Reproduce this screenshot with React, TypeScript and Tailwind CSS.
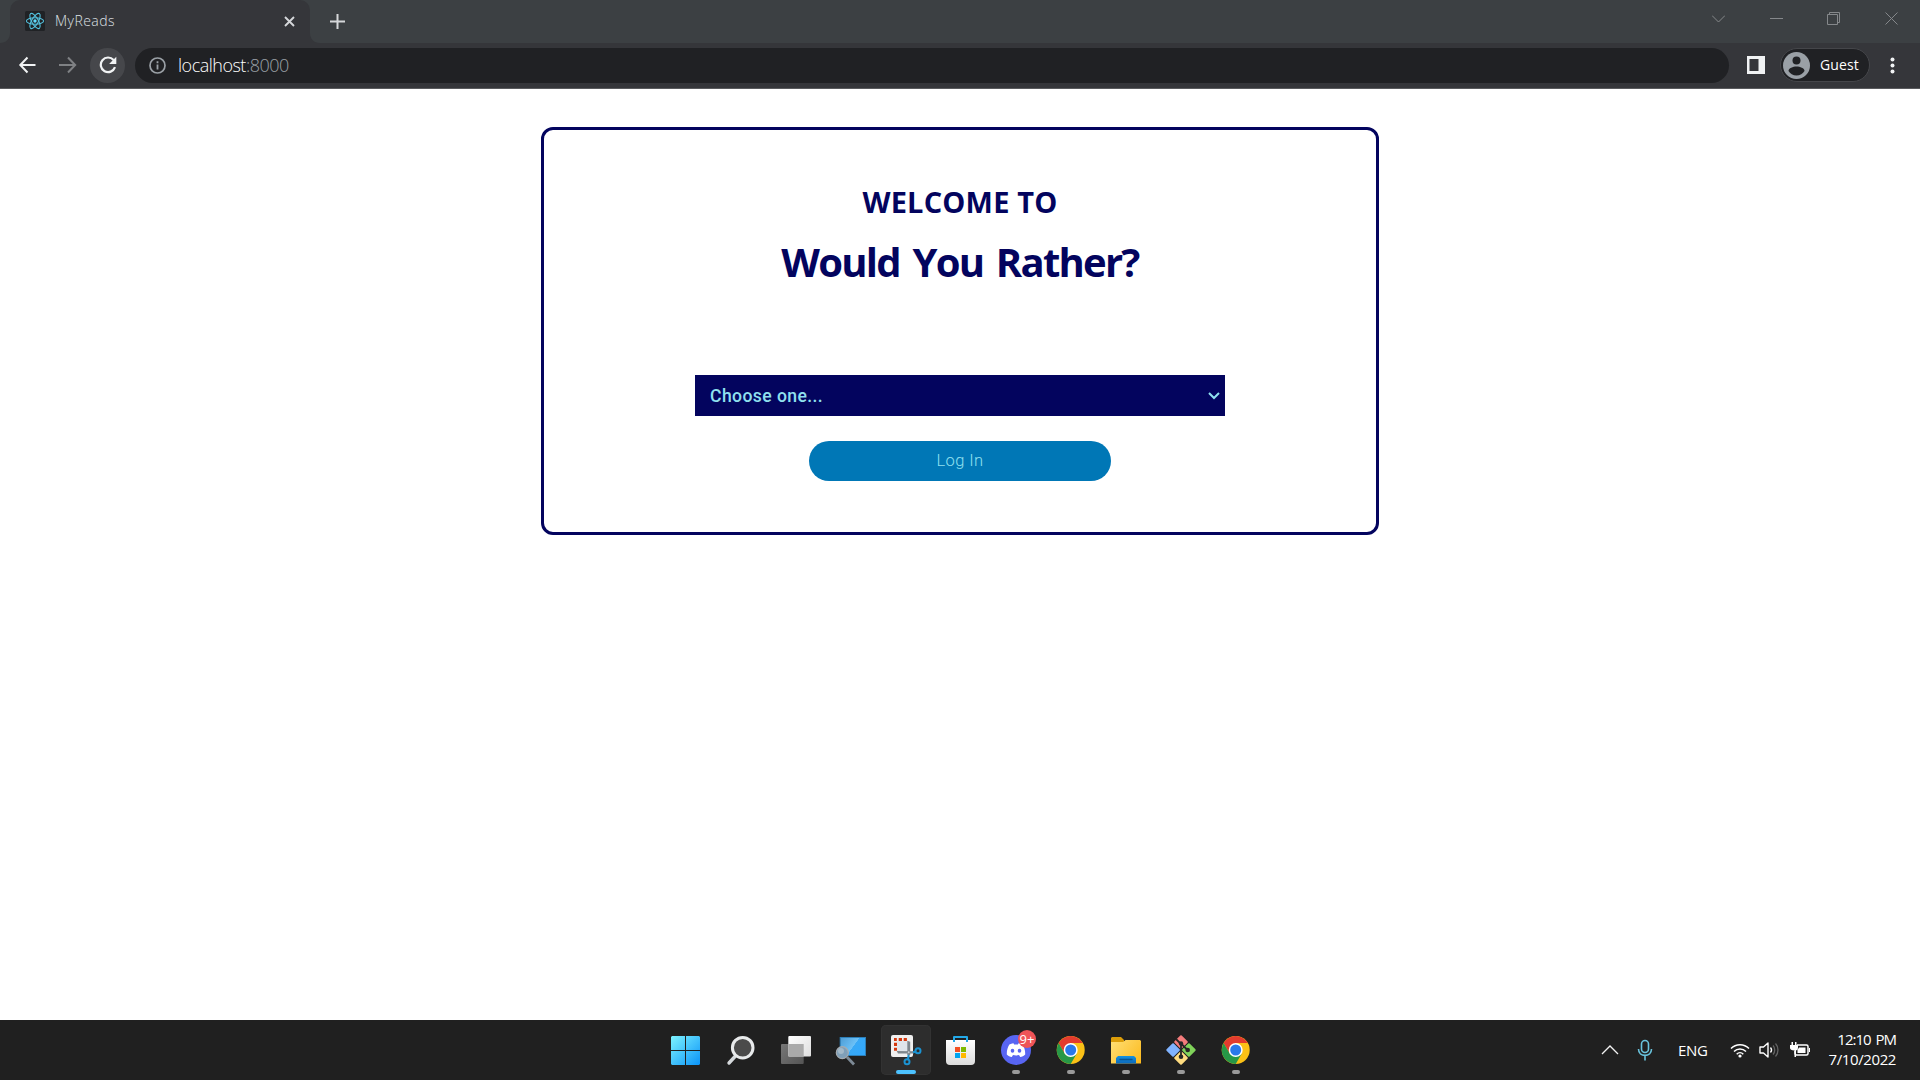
import React from "react";

const Svg = ({ w, h, children, className = "" }: { w: number; h: number; children: React.ReactNode; className?: string }) => (
  <svg width={w} height={h} viewBox={`0 0 ${w} ${h}`} fill="none" className={`block shrink-0 ${className}`}>
    {children}
  </svg>
);

function TabStrip() {
  return (
    <div className="flex h-[43px] items-start bg-[#3c4043]">
      <Svg w={10} h={43}>
        <path d="M10 43H0c6 0 10-4 10-10z" fill="#35363a" />
      </Svg>
      <div className="flex h-[43px] w-[300px] items-center rounded-t-[10px] bg-[#35363a] pb-px pl-[15px]">
        <Svg w={20} h={20}>
          <rect width="20" height="20" rx="1.5" fill="#202225" />
          <g stroke="#53c1de" strokeWidth="1.1">
            <ellipse cx="10" cy="10" rx="8.6" ry="3.3" />
            <ellipse cx="10" cy="10" rx="8.6" ry="3.3" transform="rotate(60 10 10)" />
            <ellipse cx="10" cy="10" rx="8.6" ry="3.3" transform="rotate(120 10 10)" />
          </g>
          <circle cx="10" cy="10" r="1.7" fill="#61dafb" />
        </Svg>
        <span className="ml-[10px] w-[229px] text-[14px] leading-5 font-light tracking-[0.45px] text-[#dfe1e5]">MyReads</span>
        <Svg w={11} h={11}>
          <path d="M1 1l9 9M10 1l-9 9" stroke="#d5d7da" strokeWidth="1.9" />
        </Svg>
      </div>
      <Svg w={10} h={43}>
        <path d="M0 43h10C4 43 0 39 0 33z" fill="#35363a" />
      </Svg>
      <Svg w={15} h={15} className="mt-[14px] ml-[10px]">
        <path d="M7.5 0v15M0 7.5h15" stroke="#d5d7da" strokeWidth="2" />
      </Svg>
      <div className="mt-[12px] mr-[22px] ml-auto flex h-[13px] items-center gap-[44px] text-[#85888b]">
        <Svg w={13} h={13} className="mr-px">
          <path d="M0 3.5L6.5 10 13 3.5" stroke="currentColor" />
        </Svg>
        <Svg w={13} h={13}>
          <path d="M0 6.5h13" stroke="currentColor" />
        </Svg>
        <Svg w={13} h={13} className="mr-px">
          <path d="M.5 2.500h10v10H.5zM2.500 2.500v-2h10v10h-2" stroke="currentColor" />
        </Svg>
        <Svg w={13} h={13}>
          <path d="M.5.5l12 12M12.500.5l-12 12" stroke="currentColor" />
        </Svg>
      </div>
    </div>
  );
}

function Toolbar() {
  return (
    <div className="flex h-[46px] items-center border-b border-[#5a5b5e] bg-[#35363a]">
      <Svg w={18} h={18} className="mb-px ml-[18px]">
        <path d="M17.500 9H2.500M9.500 1.500L2.300 9 9.500 16.500" stroke="#f1f3f4" strokeWidth="2" />
      </Svg>
      <Svg w={18} h={18} className="mb-px ml-[23px]">
        <path d="M0 9h15.500M9 1.500L16.200 9 9 16.500" stroke="#7f8184" strokeWidth="2" />
      </Svg>
      <div className="ml-[13px] flex size-[35px] items-center justify-center rounded-full bg-[#46474b]">
        <Svg w={18} h={18} className="mb-px">
          <path d="M14.600 4A7.300 7.300 0 1 0 16 11.200" stroke="#f1f3f4" strokeWidth="2.200" />
          <path d="M17.300.8v7.200h-7.200z" fill="#f1f3f4" />
        </Svg>
      </div>
      <div className="ml-[10px] flex h-[35px] w-[1594px] items-center rounded-full bg-[#202124] pl-[14px]">
        <Svg w={17} h={17}>
          <circle cx="8.500" cy="8.500" r="7.500" stroke="#9aa0a6" strokeWidth="1.700" />
          <path d="M8.500 7.500v5M8.500 4.200v2" stroke="#9aa0a6" strokeWidth="1.800" />
        </Svg>
        <span className="mb-px ml-[12px] text-[18px] leading-6 font-light tracking-[-0.5px] text-white">
          localhost<span className="text-[#9aa0a6]">:8000</span>
        </span>
      </div>
      <Svg w={18} h={18} className="mb-px ml-[18px]">
        <path d="M0 0h18v18H0z" fill="#f1f3f4" />
        <path d="M2.500 3h9v12h-9z" fill="#35363a" />
      </Svg>
      <div className="mb-px ml-[15px] flex h-[34px] w-[90px] items-center rounded-full border border-[#45464a] bg-[#202124] pl-[2px]">
        <Svg w={27} h={27}>
          <circle cx="13.500" cy="13.500" r="13.500" fill="#9aa0a6" />
          <circle cx="13.500" cy="8.500" r="4" fill="#202124" />
          <path d="M5.500 19c0-3 4.500-4.500 8-4.500s8 1.500 8 4.500c-1.500 2.500-4.500 4.500-8 4.500s-6.500-2-8-4.500z" fill="#202124" />
        </Svg>
        <span className="ml-[10px] text-[14px] leading-5 tracking-[0.1px] text-white">Guest</span>
      </div>
      <Svg w={5} h={17} className="mb-px ml-[20px]">
        <circle cx="2.500" cy="2.500" r="2" fill="#f1f3f4" />
        <circle cx="2.500" cy="8.500" r="2" fill="#f1f3f4" />
        <circle cx="2.500" cy="14.500" r="2" fill="#f1f3f4" />
      </Svg>
    </div>
  );
}

function LoginCard() {
  return (
    <div className="mx-auto mt-[38px] flex h-[408px] w-[838px] flex-col items-center rounded-[12px] border-3 border-[#03045e]">
      <h2 className="mt-[52px] text-[29px] leading-[40px] font-bold tracking-[0.2px] whitespace-nowrap text-[#03045e]">WELCOME TO</h2>
      <h1 className="mt-[13px] text-[40px] leading-[54px] font-bold tracking-[-1.75px] whitespace-nowrap text-[#03045e] [word-spacing:4px]">
        Would You Rather?
      </h1>
      <div className="mt-[86px] flex h-[41px] w-[530px] items-center justify-between bg-[#03045e] pr-[5px] pl-[15px]">
        <span className="font-[Roboto] text-[17.6px] leading-6 font-medium tracking-[0.4px] text-[#90e0ef]">Choose one...</span>
        <Svg w={12} h={8}>
          <path d="M1 1l5 5 5-5" stroke="#90e0ef" strokeWidth="2" />
        </Svg>
      </div>
      <button className="mt-[25px] flex h-[40px] w-[302px] items-center justify-center rounded-full bg-[#0077b6] font-[Roboto] text-[16.5px] leading-6 font-light tracking-[0.4px] text-[#90e0ef]">
        Log In
      </button>
    </div>
  );
}

const Start = () => (
  <>
    <defs>
      <linearGradient id="win" x1="10" y1="11" x2="39" y2="40" gradientUnits="userSpaceOnUse">
        <stop stopColor="#7df3ff" />
        <stop offset="1" stopColor="#0a93f8" />
      </linearGradient>
    </defs>
    <path d="M11 11h13v14H10V12zM25 11h13l1 1v13H25zM10 26h14v14H11l-1-1zM25 26h14v13l-1 1H25z" fill="url(#win)" />
  </>
);

const Search = () => (
  <>
    <path d="M19 31.500l-6 6.500" stroke="#d5d9dc" strokeWidth="3.400" strokeLinecap="round" />
    <circle cx="26.700" cy="22.700" r="10.300" fill="#4b4b4b" stroke="#e8eaeb" strokeWidth="3" />
  </>
);

const TaskView = () => (
  <>
    <defs>
      <linearGradient id="tvw" x1="17" y1="11" x2="40" y2="32" gradientUnits="userSpaceOnUse">
        <stop stopColor="#fff" />
        <stop offset="1" stopColor="#dedede" />
      </linearGradient>
      <linearGradient id="tvg" x1="10" y1="19" x2="32" y2="39" gradientUnits="userSpaceOnUse">
        <stop stopColor="#777" />
        <stop offset="1" stopColor="#555" />
      </linearGradient>
    </defs>
    <rect x="10" y="19" width="22.700" height="20" rx="1" fill="url(#tvg)" />
    <rect x="17.300" y="11" width="22.700" height="20.500" rx="1" fill="url(#tvw)" />
    <path d="M17.300 19h15.400v12.500H17.300z" fill="#aaa" />
  </>
);

const Magnifier = () => (
  <>
    <defs>
      <linearGradient id="mag" x1="14" y1="12" x2="40" y2="31" gradientUnits="userSpaceOnUse">
        <stop stopColor="#4d9bd3" />
        <stop offset=".5" stopColor="#6cc1f7" />
        <stop offset=".51" stopColor="#39a9f6" />
        <stop offset="1" stopColor="#2fa8ff" />
      </linearGradient>
    </defs>
    <rect x="14.200" y="12.500" width="25.300" height="18" fill="url(#mag)" stroke="#2d7fb8" />
    <path d="M21 32l7 7.500" stroke="#7d8a96" strokeWidth="2.800" />
    <circle cx="16.300" cy="27.700" r="6" fill="#7f9fb8" stroke="#a5abb0" strokeWidth="1.200" />
    <circle cx="15" cy="26" r="3" fill="#a3b9c9" />
  </>
);

const Snip = () => (
  <>
    <rect x="10" y="10" width="22" height="22" rx="2" fill="#f0f0f0" />
    <rect x="16" y="16" width="10.500" height="10" fill="#dfe5ea" />
    <path d="M13 13h2.800v3H13zM17.700 13H21v3h-3.300zM22.700 13h3.200v3h-3.200zM13 17.700h3V21h-3zM13 22.700h3v3h-3z" fill="#d4380d" />
    <path d="M26.300 15.700l2.900 1V30h-2.900zM15.700 26l17 .2v2.300H17z" fill="#7e878d" />
    <circle cx="27.700" cy="27.300" r="1" fill="#c9cfd3" />
    <path d="M32 27.300l2.600-.7M27.700 30l-.7 4" stroke="#1b93d2" strokeWidth="2.200" />
    <circle cx="37" cy="25.700" r="2.500" stroke="#1b93d2" strokeWidth="2" />
    <circle cx="26" cy="36.700" r="2.500" stroke="#1b93d2" strokeWidth="2" />
  </>
);

const Store = () => (
  <>
    <defs>
      <linearGradient id="bag" x1="0" y1="15" x2="0" y2="40" gradientUnits="userSpaceOnUse">
        <stop stopColor="#fff" />
        <stop offset="1" stopColor="#dcdcdc" />
      </linearGradient>
    </defs>
    <path d="M10 15h29v21a4 4 0 0 1-4 4H14a4 4 0 0 1-4-4z" fill="url(#bag)" />
    <path d="M18 17v-5h13v5" stroke="#23a9e8" strokeWidth="2" strokeLinejoin="round" />
    <path d="M19 22h5v5h-5z" fill="#f25022" />
    <path d="M25 22h5v5h-5z" fill="#7fba00" />
    <path d="M19 28h5v5h-5z" fill="#00a4ef" />
    <path d="M25 28h5v5h-5z" fill="#ffb900" />
  </>
);

const Discord = () => (
  <>
    <circle cx="25" cy="25" r="15" fill="#5865f2" />
    <path
      d="M22.500 18.300c-2 .3-3.700 1-4.300 1.500-1.600 2.500-2.500 6-2.400 9.600 1.400 1.400 3.200 2.200 5 2.600l1.200-2c2 .5 4 .5 6 0l1.200 2c1.800-.4 3.600-1.200 5-2.600.1-3.600-.8-7.100-2.400-9.600-.6-.5-2.300-1.200-4.300-1.500l-.6 1.200h-3.800z"
      fill="#fff"
    />
    <ellipse cx="21.500" cy="25.800" rx="1.800" ry="2" fill="#5865f2" />
    <ellipse cx="28.500" cy="25.800" rx="1.800" ry="2" fill="#5865f2" />
  </>
);

const Chrome = () => (
  <>
    <circle cx="24.700" cy="25" r="14" fill="#fbc116" />
    <path d="M24.700 18H36.800A14 14 0 0 0 12.600 18l6.100 10.500z" fill="#e33b2e" />
    <path d="M12.600 18a14 14 0 0 0 12.100 21l6.100-10.500-12.100 0z" fill="#279847" />
    <circle cx="24.700" cy="25" r="7" fill="#fff" />
    <circle cx="24.700" cy="25" r="5.500" fill="#2a78ea" />
  </>
);

const Folder = () => (
  <>
    <defs>
      <linearGradient id="fol" x1="10" y1="15" x2="40" y2="38" gradientUnits="userSpaceOnUse">
        <stop stopColor="#ffdf76" />
        <stop offset="1" stopColor="#fcba1d" />
      </linearGradient>
      <linearGradient id="folb" x1="0" y1="31" x2="0" y2="39" gradientUnits="userSpaceOnUse">
        <stop stopColor="#1591df" />
        <stop offset="1" stopColor="#0b66b8" />
      </linearGradient>
    </defs>
    <path d="M10 13l1-1h9l3 3v6H10z" fill="#dc9d09" />
    <path d="M10 17h12l2.500-2H39l1 1v22.500H10z" fill="url(#fol)" />
    <path d="M15 38.500V33l2-2h16l2 2v5.500z" fill="url(#folb)" />
    <path d="M19 34.500h12" stroke="#0a5592" strokeWidth="1.300" strokeLinecap="round" />
  </>
);

const Git = () => (
  <>
    <g transform="rotate(45 25 25)">
      <rect x="14.300" y="14.300" width="10.200" height="10.200" rx="1" fill="#f47c7c" />
      <rect x="25.500" y="14.300" width="10.200" height="10.200" rx="1" fill="#80d35a" />
      <rect x="25.500" y="25.500" width="10.200" height="10.200" rx="1" fill="#ffdc80" />
      <rect x="14.300" y="25.500" width="10.200" height="10.200" rx="1" fill="#80b3ff" />
    </g>
    <path d="M20 14l5 5v13M25 18.500l6.500 6.500" stroke="#262626" strokeWidth="1.800" />
    <circle cx="25" cy="18.500" r="2.200" fill="#262626" />
    <circle cx="31.700" cy="25" r="2.300" fill="#262626" />
    <circle cx="25" cy="31.700" r="2.300" fill="#262626" />
  </>
);

type TaskbarApp = { name: string; Icon: () => React.JSX.Element; state?: "active" | "open"; badge?: string };

const apps: TaskbarApp[] = [
  { name: "start", Icon: Start },
  { name: "search", Icon: Search },
  { name: "taskview", Icon: TaskView },
  { name: "magnifier", Icon: Magnifier },
  { name: "snip", Icon: Snip, state: "active" },
  { name: "store", Icon: Store },
  { name: "discord", Icon: Discord, state: "open", badge: "9+" },
  { name: "chrome", Icon: Chrome, state: "open" },
  { name: "folder", Icon: Folder, state: "open" },
  { name: "git", Icon: Git, state: "open" },
  { name: "chrome-guest", Icon: Chrome, state: "open" },
];

function Taskbar() {
  return (
    <div className="grid h-[60px] grid-cols-[661px_1fr_661px] items-center bg-[#202020] text-white">
      <div />
      <div className="flex gap-[5px]">
        {apps.map(({ name, Icon, state, badge }) => (
          <div
            key={name}
            className={`relative size-[50px] shrink-0 rounded-[5px] ${state === "active" ? "bg-[#2d2d2d] ring-1 ring-[#323232] ring-inset" : ""}`}
          >
            <Svg w={50} h={50}>
              <Icon />
              {state === "active" && <rect x="15" y="45" width="20" height="4" rx="2" fill="#4cc2ff" />}
              {state === "open" && <rect x="21" y="45" width="8" height="4" rx="2" fill="#9a9a9a" />}
            </Svg>
            {badge && (
              <div className="absolute top-[5px] left-[27px] flex size-[18px] items-center justify-center rounded-full bg-[#ef5458] text-[13px] leading-none text-white">
                {badge}
              </div>
            )}
          </div>
        ))}
      </div>
      <div className="flex items-center justify-end pr-[24px] pb-px">
        <Svg w={18} h={11}>
          <path d="M1 10l8-8 8 8" stroke="#f2f2f2" strokeWidth="1.300" />
        </Svg>
        <Svg w={16} h={22} className="ml-[18px]">
          <rect x="4.500" y="1.500" width="7" height="12" rx="3.500" stroke="#69c3dd" strokeWidth="1.600" />
          <path d="M1.500 10c0 8.500 13 8.500 13 0M8 16.500v5" stroke="#69c3dd" strokeWidth="1.600" />
        </Svg>
        <span className="ml-[25px] w-[30px] text-[15px] leading-5 tracking-[-0.3px] whitespace-nowrap">ENG</span>
        <Svg w={20} h={16} className="ml-[22px]">
          <path d="M1 6.500a12.700 12.700 0 0 1 18 0M4 9.500a8.500 8.500 0 0 1 12 0M6.700 12.200a4.700 4.700 0 0 1 6.600 0" stroke="#fff" strokeWidth="1.500" />
          <circle cx="10" cy="14" r="1.600" fill="#fff" />
        </Svg>
        <Svg w={20} h={18} className="ml-[9px]">
          <path d="M1 6h3.500L9 2v14l-4.500-4H1z" stroke="#fff" strokeWidth="1.400" strokeLinejoin="round" />
          <path d="M11.500 6.500c1.300 1.500 1.300 3.500 0 5" stroke="#fff" strokeWidth="1.300" />
          <path d="M14 4.500c2.300 2.500 2.300 6.500 0 9M16.500 2.500c3.300 3.500 3.300 9.500 0 13" stroke="#636363" strokeWidth="1.300" />
        </Svg>
        <Svg w={20} h={18} className="ml-[11px]">
          <path d="M7 4h9.500q1.500 0 1.500 1.500v7q0 1.500-1.500 1.500H6.500q-1.500 0-1.500-1.500V10" stroke="#fff" strokeWidth="1.500" />
          <path d="M9 6.500h6.500v5.500H7.500V9zM19 7h1v4h-1zM0 4h8v3q0 2-2 2.500V16H4.500V9.500Q0 9 0 7zM1.500 1H3v3H1.500zM5 1h1.500v3H5z" fill="#fff" />
        </Svg>
        <div className="mb-px ml-[19px] flex w-[69px] flex-col items-end pr-[2px] text-[15px] leading-5 whitespace-nowrap">
          <span className="tracking-[-1px] [word-spacing:2px]">12:10 PM</span>
          <span className="tracking-[-0.4px]">7/10/2022</span>
        </div>
      </div>
    </div>
  );
}

export default function App() {
  return (
    <div className="flex h-[1080px] w-[1920px] flex-col overflow-hidden bg-white font-['Open_Sans','Noto_Sans',sans-serif]">
      <TabStrip />
      <Toolbar />
      <main className="flex-1">
        <LoginCard />
      </main>
      <Taskbar />
    </div>
  );
}
